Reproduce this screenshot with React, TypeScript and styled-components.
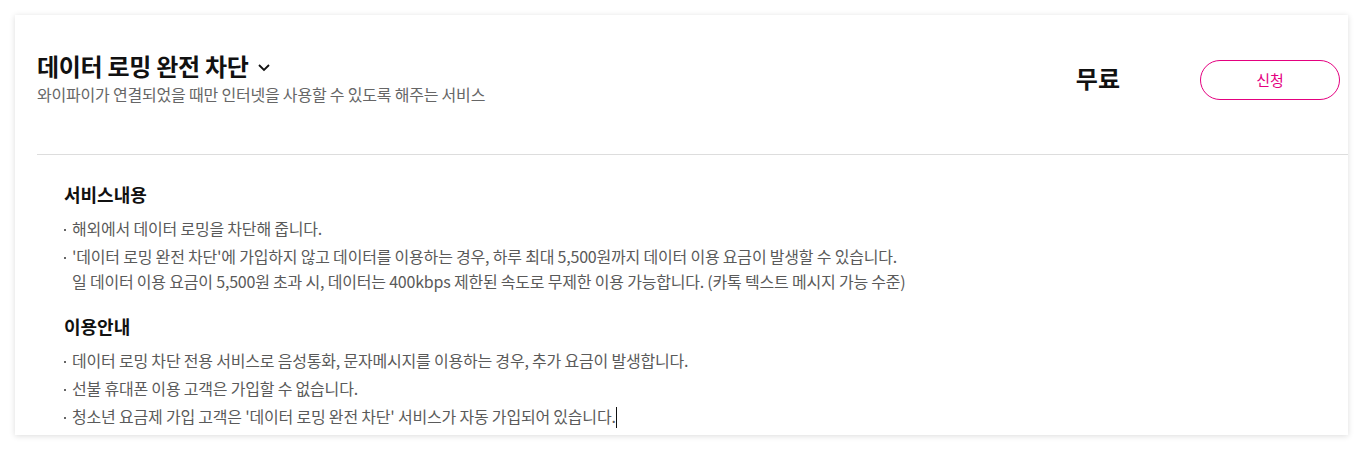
import React from "react";
import styled, { createGlobalStyle } from "styled-components";

const Global = createGlobalStyle`
  html, body { margin: 0; padding: 0; background: #ffffff; }
  body { font-family: "Noto Sans CJK KR", "Noto Sans", sans-serif; }
  * { box-sizing: border-box; }
`;

const Page = styled.div`
  padding: 15px;
`;

const Card = styled.section`
  background: #fff;
  height: 420px;
  box-shadow: 0 1px 6px rgba(0, 0, 0, 0.14);
  display: flex;
  flex-direction: column;
`;

const Header = styled.div`
  margin-left: 22px;
  height: 140px;
  border-bottom: 1px solid #dddddd;
  display: flex;
  align-items: center;
  padding-right: 8px;
  padding-bottom: 10px;
`;

const Info = styled.div`
  flex: 1;
  display: flex;
  flex-direction: column;
  gap: 0;
  margin-bottom: 3px;
`;

const TitleRow = styled.div`
  display: flex;
  align-items: center;
  gap: 9px;
`;

const Title = styled.h2`
  margin: 0;
  font-size: 24px;
  font-weight: 700;
  color: #111;
  letter-spacing: -0.3px;
  line-height: 32px;
`;

const Chevron = styled.svg`
  width: 14px;
  height: 14px;
  margin-top: 1px;
`;

const Subtitle = styled.p`
  margin: 0;
  font-size: 16px;
  color: #666;
  letter-spacing: -0.2px;
  line-height: 24px;
`;

const Price = styled.div`
  font-size: 24px;
  font-weight: 700;
  color: #111;
  margin-right: 80px;
  margin-bottom: 4px;
  line-height: 32px;
`;

const ApplyButton = styled.button`
  width: 140px;
  height: 40px;
  border: 1px solid #e4007f;
  border-radius: 20px;
  background: #fff;
  color: #e4007f;
  font-family: inherit;
  font-size: 15px;
  cursor: pointer;
`;

const Body = styled.div`
  padding: 25px 0 0 49px;
  display: flex;
  flex-direction: column;
  gap: 18px;
`;

const Section = styled.div`
  display: flex;
  flex-direction: column;
`;

const SectionTitle = styled.h3`
  margin: 0 0 8px;
  font-size: 18px;
  font-weight: 700;
  color: #111;
  line-height: 28px;
`;

const List = styled.ul`
  margin: 0;
  padding: 0;
  list-style: none;
  display: flex;
  flex-direction: column;
  gap: 3px;
`;

const Item = styled.li`
  position: relative;
  padding-left: 8px;
  font-size: 16px;
  color: #5a5a5a;
  letter-spacing: -0.2px;
  line-height: 25px;
  &::before {
    content: "";
    position: absolute;
    left: 0;
    top: 13px;
    width: 2px;
    height: 2px;
    background: #666;
  }
`;

const Caret = styled.span`
  display: inline-block;
  width: 1px;
  height: 21px;
  background: #111;
  vertical-align: -5px;
`;

export default function App() {
  return (
    <>
      <Global />
      <Page>
        <Card>
          <Header>
            <Info>
              <TitleRow>
                <Title>데이터 로밍 완전 차단</Title>
                <Chevron viewBox="0 0 14 14" fill="none">
                  <path d="M2 5l5 5 5-5" stroke="#111" strokeWidth="1.8" />
                </Chevron>
              </TitleRow>
              <Subtitle>와이파이가 연결되었을 때만 인터넷을 사용할 수 있도록 해주는 서비스</Subtitle>
            </Info>
            <Price>무료</Price>
            <ApplyButton>신청</ApplyButton>
          </Header>
          <Body>
            <Section>
              <SectionTitle>서비스내용</SectionTitle>
              <List>
                <Item>해외에서 데이터 로밍을 차단해 줍니다.</Item>
                <Item>
                  '데이터 로밍 완전 차단'에 가입하지 않고 데이터를 이용하는 경우, 하루 최대 5,500원까지 데이터 이용 요금이 발생할 수 있습니다.
                  <br />
                  일 데이터 이용 요금이 5,500원 초과 시, 데이터는 400kbps 제한된 속도로 무제한 이용 가능합니다. (카톡 텍스트 메시지 가능 수준)
                </Item>
              </List>
            </Section>
            <Section>
              <SectionTitle>이용안내</SectionTitle>
              <List>
                <Item>데이터 로밍 차단 전용 서비스로 음성통화, 문자메시지를 이용하는 경우, 추가 요금이 발생합니다.</Item>
                <Item>선불 휴대폰 이용 고객은 가입할 수 없습니다.</Item>
                <Item>
                  청소년 요금제 가입 고객은 '데이터 로밍 완전 차단' 서비스가 자동 가입되어 있습니다.
                  <Caret />
                </Item>
              </List>
            </Section>
          </Body>
        </Card>
      </Page>
    </>
  );
}
